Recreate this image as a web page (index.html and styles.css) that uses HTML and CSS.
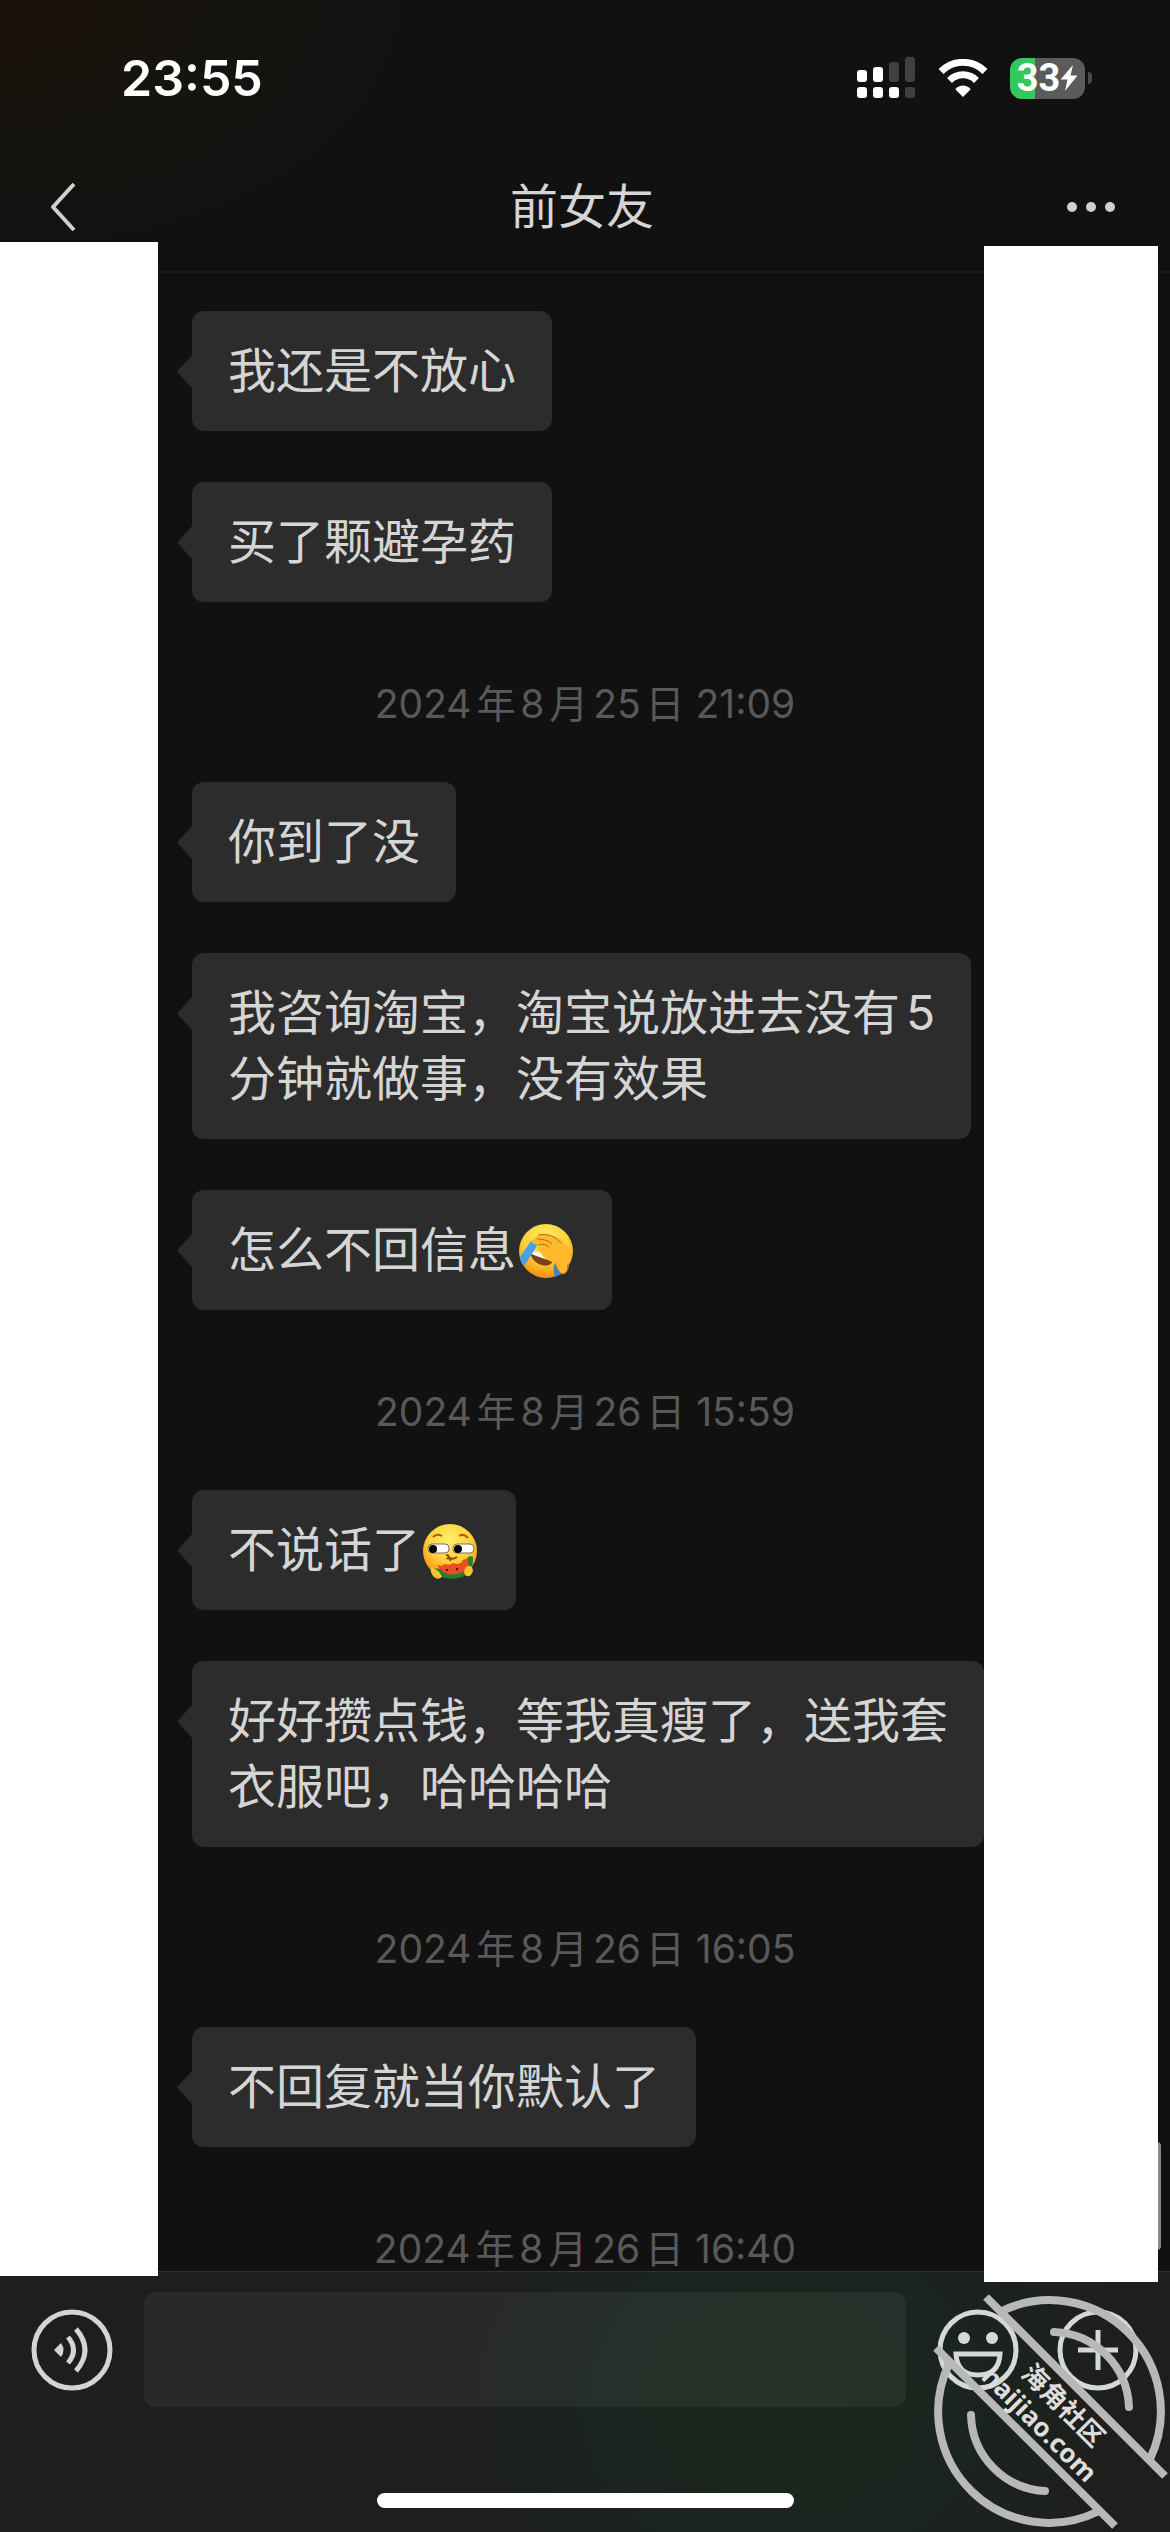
FILE: index.html
```html
<!DOCTYPE html>
<html lang="zh-CN">
<head>
<meta charset="utf-8">
<meta name="viewport" content="width=device-width, initial-scale=1">
<title>前女友</title>
<link rel="stylesheet" href="styles.css">
</head>
<body>
<div class="app">
  <header class="top">
    <div class="status">
      <time class="clock">23:55</time>
      <div class="indicators">
        <svg class="signal" width="60" height="42" viewBox="0 0 60 42" fill="#fff" aria-hidden="true">
          <rect x="1" y="13" width="10" height="12" rx="3"/><rect x="17" y="10" width="10" height="15" rx="3"/>
          <rect x="33" y="5" width="10" height="20" rx="3" fill="#404040"/><rect x="49" y="0" width="10" height="25" rx="3" fill="#404040"/>
          <rect x="1" y="30" width="10" height="11" rx="3"/><rect x="17" y="30" width="10" height="11" rx="3"/>
          <rect x="33" y="30" width="10" height="11" rx="3"/><rect x="49" y="30" width="10" height="11" rx="3" fill="#404040"/>
        </svg>
        <svg class="wifi" width="52" height="38" viewBox="0 0 52 38" aria-hidden="true">
          <path d="M4 12.500A31 31 0 0 1 48 12.500" fill="none" stroke="#fff" stroke-width="7"/>
          <path d="M12.500 21.500A19 19 0 0 1 39.500 21.500" fill="none" stroke="#fff" stroke-width="7"/>
          <path d="M26 38L18.500 30.500Q18.500 29.500 20 28.500Q26 24.500 32 28.500Q33.500 29.500 33.500 30.500Z" fill="#fff"/>
        </svg>
        <div class="battery">
          <div class="cell"><span>33</span>
            <svg width="18" height="30" viewBox="0 0 18 28" aria-hidden="true"><path d="M13 1L0.500 15.500H7.500L5 27L17.500 11.500H10.500Z" fill="#fff"/></svg>
          </div>
          <i class="cap"></i>
        </div>
      </div>
    </div>
    <nav class="bar">
      <button class="icon" aria-label="返回"><svg width="28" height="50" viewBox="0 0 28 50"><path d="M26 2L5 25L26 48" fill="none" stroke="#d0d0d0" stroke-width="4" stroke-linejoin="round"/></svg></button>
      <h1>前女友</h1>
      <button class="icon" aria-label="更多"><svg width="50" height="12" viewBox="0 0 50 12" fill="#d0d0d0"><circle cx="6" cy="6" r="5"/><circle cx="25" cy="6" r="5"/><circle cx="44" cy="6" r="5"/></svg></button>
    </nav>
  </header>

  <main class="chat">
    <p class="msg">我还是不放心</p>
    <p class="msg">买了颗避孕药</p>
    <time class="stamp">2024年8月25日 21:09</time>
    <p class="msg">你到了没</p>
    <p class="msg">我咨询淘宝，淘宝说放进去没有5<br>分钟就做事，没有效果</p>
    <p class="msg">怎么不回信息<svg class="emoji" viewBox="0 0 60 60" role="img" aria-label="捂脸">
      <defs><radialGradient id="face" cx="50%" cy="30%" r="72%"><stop offset="0" stop-color="#fff06e"/><stop offset=".55" stop-color="#ffd038"/><stop offset="1" stop-color="#f08a10"/></radialGradient></defs>
      <circle cx="30" cy="30" r="27" fill="url(#face)"/>
      <path d="M14 32Q26 35 37 40Q34 46 26 44Q17 42 14 32Z" fill="#7a4310"/>
      <path d="M16 30Q29 32 37 38L36 40Q25 37 15 33Z" fill="#fff"/>
      <path d="M15 20L23 22L8 45Q4 41 4 36Z" fill="#4b9fe6"/>
      <path d="M38 43L46 53L39 56Q37 50 38 43Z" fill="#3485cf"/>
      <path d="M16 20Q21 12 32 14Q46 15 51 26Q56 34 53 43Q52 54 46 53Q41 51 39 42Q28 39 24 31Q18 27 24 25L16 22Z" fill="#ffb92c"/>
      <path d="M22 14Q36 11 45 22M21 18Q31 18 36 23M22 24Q29 22 33 26M39 42Q42 51 46 53Q52 53 52 43" fill="none" stroke="#b8690e" stroke-width="1"/>
    </svg></p>
    <time class="stamp">2024年8月26日 15:59</time>
    <p class="msg">不说话了<svg class="emoji" viewBox="0 0 60 60" role="img" aria-label="吃瓜">
      <circle cx="30" cy="30" r="27" fill="url(#face)"/>
      <path d="M13 16Q17 12 22 15M39 15Q44 12 48 17" fill="none" stroke="#a86412" stroke-width="2"/>
      <rect x="8" y="23" width="21" height="9" rx="4" fill="#fff" stroke="#80705a"/><circle cx="13" cy="28" r="4"/>
      <rect x="33" y="23" width="21" height="9" rx="4" fill="#fff" stroke="#80705a"/><circle cx="38" cy="28" r="4"/>
      <path d="M26 34Q30 34 28 37Q32 36 30 40M28 37Q33 39 37 36" fill="none" stroke="#8c4b0c" stroke-width="2"/>
      <path d="M12 47Q33 51 50 35L53 36Q54 51 42 56Q27 61 12 51Z" fill="#1d8035"/>
      <path d="M17 44Q22 46 25 43Q30 45 33 42Q38 44 42 42Q41 38 48 38Q51 50 37 53Q24 56 17 44Z" fill="#ee4b24"/>
      <circle cx="27" cy="49" r="1"/><circle cx="37" cy="48" r="1"/>
      <path d="M12 46Q20 50 22 56Q17 60 13 55Q9 49 12 46ZM46 46Q52 42 53 50Q50 58 45 54Q43 50 46 46Z" fill="#ffc12f"/>
    </svg></p>
    <p class="msg">好好攒点钱，等我真瘦了，送我套衣服吧，哈哈哈哈</p>
    <time class="stamp">2024年8月26日 16:05</time>
    <p class="msg">不回复就当你默认了</p>
    <time class="stamp">2024年8月26日 16:40</time>
    <i class="thumb"></i>
    <i class="cover left"></i>
    <i class="cover right"></i>
  </main>

  <footer class="composer">
    <div class="tools">
      <button class="icon" aria-label="语音"><svg width="82" height="82" viewBox="0 0 82 82" fill="none" stroke="#d4d4d4"><circle cx="41" cy="41" r="38" stroke-width="5"/><path d="M23 41L30 34Q35 41 30 48Z" fill="#d4d4d4" stroke="none"/><path d="M37 28Q48 41 37 54M45 20Q63 41 45 62" stroke-width="5"/></svg></button>
      <input class="field" type="text" aria-label="消息">
      <button class="icon" aria-label="表情"><svg width="82" height="82" viewBox="0 0 82 82"><circle cx="41" cy="41" r="38" fill="none" stroke="#d4d9d6" stroke-width="5"/><circle cx="27" cy="29" r="6" fill="#d4d9d6"/><circle cx="55" cy="29" r="6" fill="#d4d9d6"/><path d="M19 45H63Q62 66 41 66Q20 66 19 45Z" fill="none" stroke="#d4d9d6" stroke-width="5"/></svg></button>
      <button class="icon" aria-label="更多功能"><svg width="82" height="82" viewBox="0 0 82 82" fill="none" stroke="#d4d9d6" stroke-width="5"><circle cx="41" cy="41" r="38"/><path d="M41 21V61M21 41H61"/></svg></button>
    </div>
    <i class="home"></i>
    <svg class="stampmark" width="240" height="240" viewBox="30 52 240 240" role="img" aria-label="海角社区 haijiao.com">
      <g fill="none" stroke="#b8b8b8" stroke-width="8">
        <path d="M86 57L265 236M36 108L215 286"/>
        <path d="M102 71A111 111 0 0 1 250 219M49 124A111 111 0 0 0 199 271"/>
        <path d="M154 92A78 78 0 0 1 229 167M71 175A78 78 0 0 0 145 251" stroke-linecap="round"/>
      </g>
      <text class="mark-cn" transform="translate(120 135) rotate(45)">海角社区</text>
      <text class="mark-en" transform="translate(80 138) rotate(45)">haijiao.com</text>
    </svg>
  </footer>
</div>
</body>
</html>
```
FILE: styles.css
```css
* { box-sizing: border-box; }
body {
  margin: 0;
  background: #111;
  color: #d5d5d5;
  font-family: Inter, "Noto Sans CJK SC", sans-serif;
  text-autospace: normal;
}
button { padding: 0; border: 0; background: none; }
svg { display: block; }

.app {
  display: flex;
  flex-direction: column;
  min-height: 100vh;
}

.top {
  padding-bottom: 13px;
  border-bottom: 2px solid #1a1a1a;
  background: radial-gradient(ellipse 420px 260px at 0 0, #1d120b, #16140f 50%, #111);
}
.status {
  display: flex;
  justify-content: space-between;
  align-items: center;
  height: 156px;
  padding: 0 78px 0 121px;
}
.clock {
  color: #fff;
  font-size: 50px;
  font-weight: 600;
}
.indicators {
  display: flex;
  align-items: center;
  gap: 21px;
}
.battery {
  display: flex;
  align-items: center;
  gap: 3px;
}
.cell {
  display: flex;
  align-items: center;
  justify-content: center;
  width: 75px;
  height: 41px;
  border-radius: 12px;
  background: linear-gradient(90deg, #34c759 33%, #5b5b5b 33%);
  color: #fff;
  font: bold 38px/41px Roboto, sans-serif;
}
.cap {
  width: 4px;
  height: 12px;
  border-radius: 0 4px 4px 0;
  background: #4a4a4a;
}
.bar {
  display: grid;
  grid-template-columns: 1fr auto 1fr;
  align-items: center;
  height: 102px;
  padding: 0 54px 0 48px;
}
.bar .icon { justify-self: start; }
.bar .icon:last-child { justify-self: end; }
.bar h1 {
  margin: 0;
  font-size: 48px;
  font-weight: 400;
  line-height: 66px;
}

.chat {
  position: relative;
  z-index: 1;
  display: flex;
  flex-direction: column;
  align-items: flex-start;
  gap: 51px;
  padding-top: 38px;
}
.msg {
  position: relative;
  max-width: 792px;
  margin: 0 0 0 192px;
  padding: 27px 36px;
  border-radius: 12px;
  background: #2c2c2c;
  font-size: 48px;
  line-height: 66px;
}
.msg::before {
  content: "";
  position: absolute;
  left: -15px;
  top: 44px;
  width: 15px;
  height: 33px;
  background: #2c2c2c;
  clip-path: polygon(100% 0, 100% 100%, 0 50%);
}
.emoji {
  display: inline-block;
  width: 60px;
  height: 60px;
  vertical-align: -14px;
}
.stamp {
  align-self: center;
  padding-top: 28px;
  color: #595959;
  font-size: 39px;
  line-height: 45px;
}
.stamp:not(:last-of-type) { margin-bottom: 5px; }
.thumb {
  position: absolute;
  right: 9px;
  bottom: 21px;
  width: 9px;
  height: 108px;
  border-radius: 4px;
  background: #888;
}
.cover {
  position: absolute;
  background: #fff;
}
.cover.left {
  left: 0;
  top: -31px;
  bottom: -5px;
  width: 158px;
}
.cover.right {
  right: 12px;
  top: -27px;
  bottom: -11px;
  width: 174px;
}

.composer {
  position: relative;
  flex: 1;
  display: flex;
  flex-direction: column;
  justify-content: space-between;
  align-items: center;
  padding: 20px 31px 24px;
  border-top: 1px solid #333;
  background: radial-gradient(ellipse 360px 300px at 67% 50%, #1a271f, #1b241e 50%, #1e1e1e);
}
.tools {
  display: grid;
  grid-template-columns: 82px 1fr 82px 82px;
  align-items: center;
  align-self: stretch;
  column-gap: 38px;
}
.field {
  justify-self: center;
  width: calc(100% + 14px);
  height: 115px;
  padding: 0 24px;
  border: 0;
  border-radius: 12px;
  background: rgba(255, 255, 255, .05);
  color: #d5d5d5;
  font: 48px Inter, "Noto Sans CJK SC", sans-serif;
}
.home {
  width: 417px;
  height: 15px;
  border-radius: 8px;
  background: #fff;
}
.stampmark {
  position: absolute;
  right: 0;
  bottom: 0;
}
.mark-cn, .mark-en {
  fill: #ddd;
  font: 700 26px "Noto Sans", "Noto Sans CJK SC", sans-serif;
}
```
